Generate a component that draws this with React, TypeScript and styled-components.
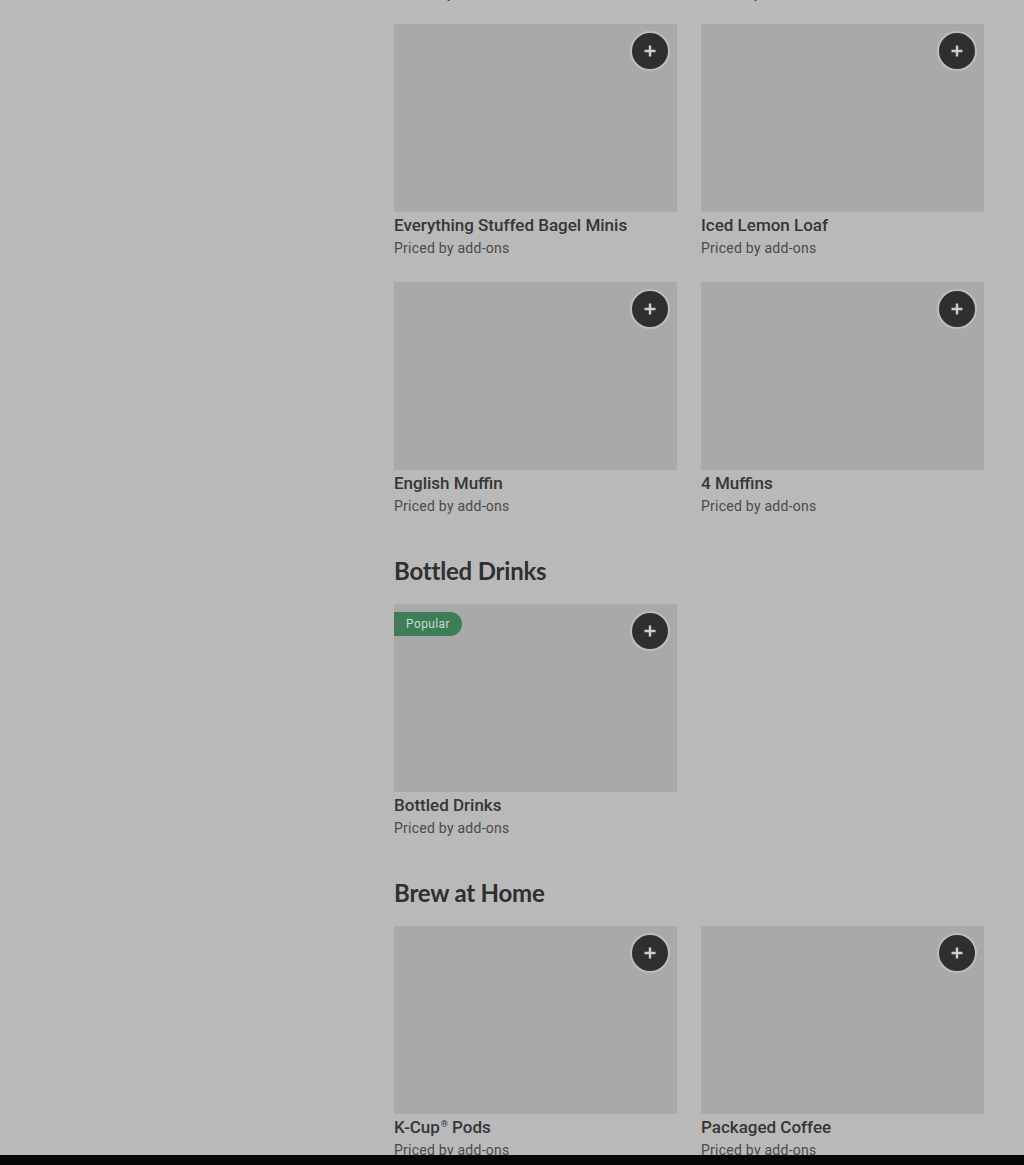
import { FC, ReactNode } from 'react';
import styled, { createGlobalStyle } from 'styled-components';

const GlobalStyle = createGlobalStyle`
  html, body {
    margin: 0;
    padding: 0;
    background: #b9b9b9;
  }
  body {
    font-family: Roboto, 'Liberation Sans', sans-serif;
    color: #303030;
  }
`;

type MenuItem = {
  id: string;
  name: ReactNode;
  popular?: boolean;
};

type MenuSection = {
  title?: string;
  items: MenuItem[];
};

const StyledMark = styled.sup`
  font-size: 9px;
  line-height: 0;
  vertical-align: 6px;
  margin-left: 1px;
`;

const sections: MenuSection[] = [
  {
    items: [
      { id: 'bagel', name: 'Everything Stuffed Bagel Minis' },
      { id: 'loaf', name: 'Iced Lemon Loaf' },
      { id: 'muffin', name: 'English Muffin' },
      { id: 'muffins', name: '4 Muffins' },
    ],
  },
  {
    title: 'Bottled Drinks',
    items: [{ id: 'bottled', name: 'Bottled Drinks', popular: true }],
  },
  {
    title: 'Brew at Home',
    items: [
      {
        id: 'kcup',
        name: (
          <>
            K-Cup<StyledMark>®</StyledMark> Pods
          </>
        ),
      },
      { id: 'packaged', name: 'Packaged Coffee' },
    ],
  },
];

const StyledPage = styled.div`
  height: 1165px;
  display: flex;
  flex-direction: column;
  overflow: hidden;
`;

const StyledViewport = styled.div`
  flex: 1;
  overflow: hidden;
  display: flex;
`;

const StyledSidebar = styled.aside`
  width: 394px;
  flex: none;
`;

const StyledMain = styled.main`
  width: 590px;
  margin-top: -17px;
`;

const StyledSection = styled.section`
  & + & {
    padding-top: 39px;
  }
`;

const StyledHeading = styled.h2`
  margin: 0 0 17px;
  font-family: Lato, 'Liberation Sans', sans-serif;
  font-size: 24px;
  line-height: 32px;
  font-weight: 700;
  letter-spacing: -0.2px;
  color: #2f2f2f;
`;

const StyledGrid = styled.div`
  display: grid;
  grid-template-columns: repeat(2, 283px);
  gap: 24px;
`;

/* tail of the row scrolled above the viewport */
const StyledCut = styled.div`
  height: 20px;
  display: grid;
  grid-template-columns: repeat(2, 283px);
  gap: 24px;
  margin-bottom: 21px;
`;

const StyledCard = styled.div`
  display: flex;
  flex-direction: column;
`;

const StyledImage = styled.div`
  position: relative;
  height: 188px;
  background: #a9a9a9;
`;

const StyledAddButton = styled.button`
  position: absolute;
  top: 7px;
  right: 7px;
  width: 40px;
  height: 40px;
  border-radius: 50%;
  border: 2px solid #bdbdbd;
  background: #2f2f2f;
  padding: 0;
  display: flex;
  align-items: center;
  justify-content: center;
  cursor: pointer;
`;

const StyledBadge = styled.span`
  position: absolute;
  top: 8px;
  left: 0;
  height: 24px;
  padding: 0 12px;
  display: flex;
  align-items: center;
  background: #3d7d59;
  color: #c9d9ce;
  font-size: 12px;
  letter-spacing: 0.4px;
  border-radius: 0 12px 12px 0;
`;

const StyledName = styled.div`
  margin-top: 3px;
  font-size: 17px;
  line-height: 20px;
  font-weight: 500;
  color: #363636;
`;

const StyledPrice = styled.div<{ $flush?: boolean }>`
  margin-top: ${(props) => (props.$flush ? 0 : 3)}px;
  font-size: 14px;
  line-height: 20px;
  letter-spacing: 0.25px;
  color: #4a4a4a;
`;

const StyledBottomBar = styled.div`
  height: 10px;
  flex: none;
  background: #050505;
`;

const PlusIcon: FC = () => (
  <svg width="14" height="14" viewBox="0 0 14 14" aria-hidden>
    <path d="M7 1.5v11M1.5 7h11" stroke="#cfcfcf" strokeWidth="2.4" />
  </svg>
);

const Card: FC<{ item: MenuItem }> = ({ item }) => (
  <StyledCard>
    <StyledImage>
      {item.popular && <StyledBadge>Popular</StyledBadge>}
      <StyledAddButton aria-label="Add item">
        <PlusIcon />
      </StyledAddButton>
    </StyledImage>
    <StyledName>{item.name}</StyledName>
    <StyledPrice>Priced by add-ons</StyledPrice>
  </StyledCard>
);

const App: FC = () => (
  <StyledPage>
    <GlobalStyle />
    <StyledViewport>
      <StyledSidebar />
      <StyledMain>
        <StyledCut>
          <StyledPrice $flush>Priced by add-ons</StyledPrice>
          <StyledPrice $flush>Priced by add-ons</StyledPrice>
        </StyledCut>
        {sections.map((section, i) => (
          <StyledSection key={i}>
            {section.title && <StyledHeading>{section.title}</StyledHeading>}
            <StyledGrid>
              {section.items.map((item) => (
                <Card key={item.id} item={item} />
              ))}
            </StyledGrid>
          </StyledSection>
        ))}
      </StyledMain>
    </StyledViewport>
    <StyledBottomBar />
  </StyledPage>
);

export default App;
